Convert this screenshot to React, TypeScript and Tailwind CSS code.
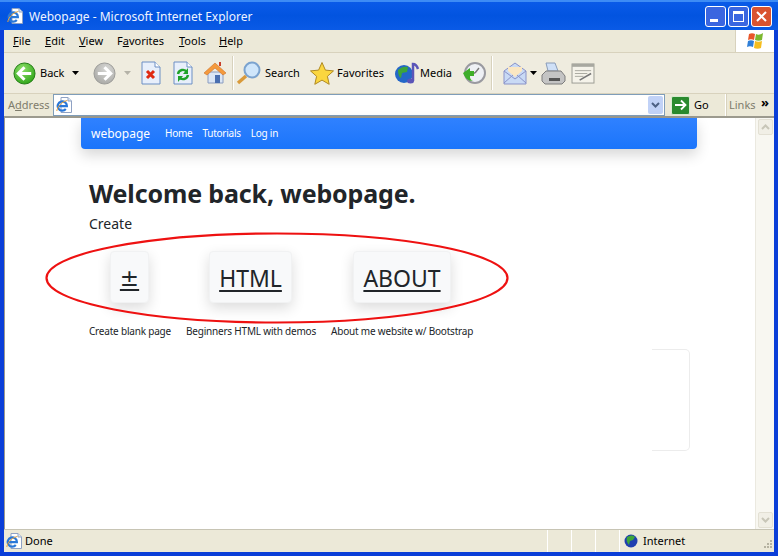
import React from "react";

const sep = <div className="w-[2px] h-[34px] bg-[#d8d2bd] border-r border-white shrink-0" />;

function IEIcon({ size = 16 }: { size?: number }) {
  return (
    <svg width={size} height={size} viewBox="0 0 16 16" className="shrink-0">
      <path d="M5 .5h7l3.500 3.500v11.500H5z" fill="#fff" stroke="#8fa2c4" />
      <path d="M12 .5V4h3.500" fill="#dfe8f5" stroke="#8fa2c4" />
      <path d="M1.500 9.200h9.400A4.600 4.600 0 1 0 9.800 12" fill="none" stroke="#2a78d8" strokeWidth="2.200" />
      <path d="M.8 14c.6-4.500 5-9.500 10.500-10.500" fill="none" stroke="#e8a33c" strokeWidth="1" />
    </svg>
  );
}

function Arrow({ id, from, to, dark, flip }: { id: string; from: string; to: string; dark: string; flip?: boolean }) {
  return (
    <svg width="23" height="23" viewBox="0 0 24 24" className={flip ? "shrink-0 -scale-x-100" : "shrink-0"}>
      <defs>
        <radialGradient id={id} cx="0.4" cy="0.3" r="0.8">
          <stop offset="0" stopColor={from} />
          <stop offset="1" stopColor={to} />
        </radialGradient>
      </defs>
      <circle cx="12" cy="12" r="11" fill={`url(#${id})`} stroke={dark} strokeWidth="1" />
      <path d="M6 12h13M12 5.500 5.500 12l6.500 6.500" fill="none" stroke="#fff" strokeWidth="3.200" />
    </svg>
  );
}

function Caret({ c = "#000" }: { c?: string }) {
  return <svg width="7" height="4" viewBox="0 0 7 4" className="shrink-0"><path d="M0 0h7L3.500 4z" fill={c} /></svg>;
}

function CapBtn({ children, bg }: { children: React.ReactNode; bg: string }) {
  return (
    <div className={`w-[21px] h-[21px] rounded-[3px] border border-white flex items-center justify-center ${bg}`}>
      {children}
    </div>
  );
}

function Menu({ label, u, w }: { label: string; u: number; w?: string }) {
  return (
    <span className={w}>
      {label.slice(0, u)}
      <span className="underline">{label[u]}</span>
      {label.slice(u + 1)}
    </span>
  );
}

function ScrollBtn({ up }: { up: boolean }) {
  return (
    <div className="h-[16px] w-[15px] ml-auto mr-[1px] rounded-[2px] border border-[#e3e0d4] bg-[#f1efe6] flex items-center justify-center">
      <svg width="9" height="6" viewBox="0 0 9 6">
        <path d={up ? "M1 5l3.500-3.500L8 5" : "M1 1l3.500 3.500L8 1"} fill="none" stroke="#c8c6b8" strokeWidth="2" />
      </svg>
    </div>
  );
}

function Card({ label, w, ml, symbol }: { label: string; w: string; ml: string; symbol?: boolean }) {
  return (
    <div className={`${w} ${ml} h-[52px] pt-[2px] rounded-[4px] bg-[#f8f9fa] border border-[#f1f2f3] shadow-[0_5px_14px_rgba(0,0,0,0.14)] flex items-center justify-center underline underline-offset-[3px] text-[#212529] text-[23px] ${symbol ? "font-['DejaVu_Sans',sans-serif]" : ""}`}>
      {label}
    </div>
  );
}

export default function App() {
  return (
    <div className="w-[778px] h-[556px] overflow-hidden flex flex-col bg-[#0a3ed8] text-black text-[11px] font-['Noto_Sans',sans-serif]">
      {/* Title bar */}
      <div className="h-[30px] shrink-0 flex items-center pl-[7px] pr-[6px] bg-gradient-to-b from-[#0a5be8] via-[#0254e0] to-[#0a5ae6] border-t-2 border-[#3d8cf5]">
        <IEIcon />
        <span className="ml-[6px] mt-[1px] text-[12px] text-[#eef3ff]">Webopage - Microsoft Internet Explorer</span>
        <div className="ml-auto flex gap-[2px]">
          <CapBtn bg="bg-[#3a66e0]"><div className="w-[8px] h-[3px] bg-white mt-[9px] mr-[3px]" /></CapBtn>
          <CapBtn bg="bg-[#3a66e0]"><div className="w-[11px] h-[11px] border border-white border-t-[3px]" /></CapBtn>
          <CapBtn bg="bg-[#d9532f]">
            <svg width="11" height="11" viewBox="0 0 11 11"><path d="M1 1l9 9M10 1l-9 9" stroke="#fff" strokeWidth="2" /></svg>
          </CapBtn>
        </div>
      </div>

      {/* Frame body */}
      <div className="flex-1 min-h-0 mx-[4px] mb-[4px] flex flex-col bg-[#ece9d8]">
        {/* Menu */}
        <div className="h-[23px] shrink-0 flex items-center border-b border-[#d8d2bd]">
          <div className="flex pl-[9px] mt-[1px]">
            <Menu label="File" u={0} w="w-[32px]" />
            <Menu label="Edit" u={0} w="w-[34px]" />
            <Menu label="View" u={0} w="w-[38px]" />
            <Menu label="Favorites" u={1} w="w-[62px]" />
            <Menu label="Tools" u={0} w="w-[40px]" />
            <Menu label="Help" u={0} />
          </div>
          <div className="ml-auto w-[39px] h-full bg-white flex items-center justify-center border-l border-[#d8d2bd]">
            <svg width="20" height="18" viewBox="0 0 20 18">
              <path d="M4 2c2-1 4-1 6 0L9 8C7 7 5 7 3 8z" fill="#e8562a" />
              <path d="M11 2c2 1 4 1 7-1l-1 7c-2 1-5 1-7 0z" fill="#7cb82f" />
              <path d="M3 9c2-1 4-1 6 0l-1 6c-2-1-4-1-6 0z" fill="#2f7fd8" />
              <path d="M10 9c2 1 5 1 7 0l-1 7c-2 1-5 1-7 0z" fill="#f5bd1f" />
            </svg>
          </div>
        </div>

        {/* Toolbar */}
        <div className="h-[41px] shrink-0 flex items-center pl-[9px] border-b border-[#d8d2bd] bg-[#efecdf]">
          <Arrow id="back" from="#8fe06a" to="#27a012" dark="#1f7a12" />
          <span className="ml-[4px] w-[32px]">Back</span>
          <Caret />
          <div className="ml-[14px]"><Arrow id="fwd" from="#d8d8d6" to="#a6a6a2" dark="#9a9a96" flip /></div>
          <div className="ml-[8px]"><Caret c="#b5b3a8" /></div>
          <svg width="20" height="24" viewBox="0 0 20 24" className="ml-[10px] shrink-0">
            <path d="M1 1h13l5 5v17H1z" fill="#e8effb" stroke="#6d8fc4" />
            <path d="M14 1v5h5" fill="#fff" stroke="#6d8fc4" />
            <path d="M6 10l7 7M13 10l-7 7" stroke="#e02a12" strokeWidth="3" />
          </svg>
          <svg width="20" height="24" viewBox="0 0 20 24" className="ml-[12px] shrink-0">
            <path d="M1 1h13l5 5v17H1z" fill="#e8effb" stroke="#6d8fc4" />
            <path d="M14 1v5h5" fill="#fff" stroke="#6d8fc4" />
            <path d="M5 13a5 5 0 0 1 9-2M15 14a5 5 0 0 1-9 2" fill="none" stroke="#1fa32a" strokeWidth="2.400" />
            <path d="M15 7v6h-5zM5 21v-6h5z" fill="#1fa32a" />
          </svg>
          <svg width="24" height="24" viewBox="0 0 24 24" className="ml-[10px] shrink-0">
            <path d="M5 11v11h15V11z" fill="#dbe6f5" stroke="#8a9cc0" />
            <path d="M1 12 12 2l11 10-3 2-8-7-8 7z" fill="#f59a3c" stroke="#c9702a" strokeWidth=".6" />
            <rect x="12" y="14" width="5" height="8" fill="#4a6fb0" />
            <rect x="16" y="1" width="2" height="4" fill="#c9402a" />
          </svg>
          <div className="ml-[5px]">{sep}</div>
          <svg width="26" height="24" viewBox="0 0 26 24" className="ml-[2px] shrink-0">
            <circle cx="16" cy="9" r="7.500" fill="#cfe6fb" stroke="#7ba3cf" strokeWidth="2" />
            <path d="M10 15 2 22" stroke="#d99a3a" strokeWidth="3.400" />
          </svg>
          <span className="ml-[3px] w-[44px]">Search</span>
          <svg width="26" height="25" viewBox="0 0 26 25" className="shrink-0">
            <path d="M13 1.500l3.400 7.600 8.100.8-6.100 5.400 1.800 8-7.200-4.200-7.200 4.200 1.800-8L1.500 9.900l8.100-.8z" fill="#fbd63f" stroke="#b08a22" />
          </svg>
          <span className="ml-[2px] w-[57px]">Favorites</span>
          <svg width="26" height="24" viewBox="0 0 26 24" className="shrink-0">
            <circle cx="10" cy="13" r="9" fill="#2467c8" />
            <path d="M4 9c3-3 7-4 10-3l-1 5-5 1-1 5c-2-1-3-4-3-8z" fill="#3da53a" />
            <path d="M19 20V3c2 0 4 2 5 5" fill="none" stroke="#5b55b8" strokeWidth="2.500" />
            <ellipse cx="16.500" cy="20" rx="3.500" ry="2.500" fill="#5b55b8" />
          </svg>
          <span className="w-[41px]">Media</span>
          <svg width="26" height="24" viewBox="0 0 26 24" className="shrink-0">
            <circle cx="14" cy="12" r="10" fill="#eef0f5" stroke="#9a9aa0" strokeWidth="2" />
            <path d="M14 12l4-5M14 12h-4" stroke="#777" strokeWidth="1.400" />
            <path d="M2 12l7-5v3h4v5H9a5 5 0 0 0 3 5C7 20 4 17 2 12z" fill="#3fae2a" />
          </svg>
          <div className="ml-[4px]">{sep}</div>
          <svg width="25" height="24" viewBox="0 0 25 24" className="ml-[10px] shrink-0">
            <path d="M1 10 12 2l11 8v13H1z" fill="#c9daf5" stroke="#8a93c8" />
            <path d="M5 10V6h14v4l-7 6z" fill="#fbe7c2" />
            <path d="M1 22l9-8M23 22l-9-8M1 10l11 8 11-8" fill="none" stroke="#8a93c8" />
          </svg>
          <div className="ml-[2px]"><Caret /></div>
          <svg width="25" height="25" viewBox="0 0 25 25" className="ml-[4px] shrink-0">
            <path d="M5 2h9l3 8H7z" fill="#cfe0f7" stroke="#8a9cb8" />
            <path d="M1 14l4-4h15l4 5v5l-3 3H4l-3-3z" fill="#c4c4c4" stroke="#7d7d7d" />
            <rect x="8" y="17" width="11" height="3" fill="#555" />
          </svg>
          <svg width="24" height="21" viewBox="0 0 25 22" className="ml-[5px] shrink-0">
            <rect x="1" y="1" width="23" height="20" fill="#f5f3ea" stroke="#9a9a92" />
            <rect x="1" y="1" width="23" height="3" fill="#a8a8a0" />
            <path d="M4 8h17M4 11h13M4 14h9" stroke="#a8a8a0" />
            <path d="M9 18l12-7" stroke="#777" strokeWidth="1.600" />
          </svg>
        </div>

        {/* Address bar */}
        <div className="h-[22px] shrink-0 flex items-center bg-[#ece9d8]">
          <span className="pl-[4px] w-[49px] text-[#7e7c6c]"><Menu label="Address" u={1} /></span>
          <div className="w-[612px] h-[22px] flex items-center bg-white border border-[#7f9db9] pl-[2px] pr-[1px]">
            <IEIcon />
            <div className="ml-auto w-[15px] h-[18px] rounded-[2px] bg-[#c1d2f7] flex items-center justify-center">
              <svg width="9" height="6" viewBox="0 0 9 6"><path d="M1 1l3.500 3.500L8 1" fill="none" stroke="#4d6185" strokeWidth="2" /></svg>
            </div>
          </div>
          <div className="ml-[6px] w-[19px] h-[19px] rounded-[2px] bg-[#2a8a2e] border border-[#d8ebd0] flex items-center justify-center shrink-0">
            <svg width="13" height="12" viewBox="0 0 13 12"><path d="M1 6h10M7 1.500 11.500 6 7 10.500" fill="none" stroke="#fff" strokeWidth="1.800" /></svg>
          </div>
          <span className="ml-[4px] w-[31px]">Go</span>
          <div className="w-[2px] h-full border-l border-white bg-[#d8d2bd]" />
          <span className="ml-[2px] w-[32px] text-[#7e7c6c]">Links</span>
          <span className="-mt-[6px] font-bold leading-none text-[13px]">»</span>
        </div>

        {/* Content */}
        <div className="flex-1 min-h-0 flex border-t-[2px] border-[#9c9a8e] border-l border-l-[#9c9a8e] bg-white relative">
          <div className="flex-1 min-w-0 pl-[76px] text-[#212529]">
            <div className="w-[616px] h-[31px] flex items-center pl-[10px] rounded-b-[4px] bg-gradient-to-b from-[#2f81ff] to-[#1a75fb] shadow-[0_6px_14px_rgba(0,0,0,0.16)] text-white">
              <span className="text-[12px] w-[60px]">webopage</span>
              <div className="ml-[14px] flex gap-[10px] text-[10px] tracking-[-0.25px]">
                <span>Home</span>
                <span>Tutorials</span>
                <span>Log in</span>
              </div>
            </div>
            <div className="pl-[8px]">
              <h1 className="mt-[29px] text-[25px] leading-[30px] font-bold tracking-[-0.13px]">Welcome back, webopage.</h1>
              <div className="mt-[5px] text-[14px] leading-[22px]">Create</div>
              <div className="mt-[16px] flex">
                <Card label="±" w="w-[39px]" ml="ml-[21px]" symbol />
                <Card label="HTML" w="w-[83px]" ml="ml-[60px]" />
                <Card label="ABOUT" w="w-[98px]" ml="ml-[61px]" />
              </div>
              <div className="mt-[21px] flex text-[10px] leading-[14px] tracking-[-0.2px]">
                <span>Create blank page</span>
                <span className="ml-[15px]">Beginners HTML with demos</span>
                <span className="ml-[15px]">About me website w/ Bootstrap</span>
              </div>
              <div className="mt-[11px] ml-[563px] w-[38px] h-[102px] rounded-r-[5px] border border-l-0 border-[#ececec]" />
            </div>
          </div>

          {/* Scrollbar */}
          <div className="w-[19px] shrink-0 flex flex-col justify-between py-[1px] bg-[#f8f7f1] border-l border-[#ebe9e0]">
            <ScrollBtn up />
            <ScrollBtn up={false} />
          </div>

          {/* Red ellipse annotation */}
          <svg width="470" height="98" viewBox="0 0 470 98" className="absolute left-[37px] top-[113px] pointer-events-none">
            <ellipse cx="235" cy="47" rx="230.500" ry="44.500" fill="none" stroke="#ee1111" strokeWidth="2.200" />
          </svg>
        </div>

        {/* Status bar */}
        <div className="h-[23px] shrink-0 flex items-center border-t border-[#c7c4b4] bg-[#ece9d8]">
          <div className="ml-[2px]"><IEIcon /></div>
          <span className="ml-[3px] mt-[1px]">Done</span>
          <div className="ml-auto flex items-stretch h-full">
            <div className="w-[24px] border-r border-white" />
            <div className="w-[24px] border-r border-white" />
            <div className="w-[24px] border-r border-white" />
            <div className="w-[24px] border-r border-white" />
            <div className="w-[154px] flex items-center pl-[4px]">
              <svg width="14" height="14" viewBox="0 0 14 14"><circle cx="7" cy="7" r="6.500" fill="#1f3fb0" /><path d="M3 3c3-2 6-2 8 0L9 6 6 7 5 11C3 9 2 6 3 3z" fill="#3da53a" /></svg>
              <span className="ml-[5px] mt-[1px]">Internet</span>
              <svg width="11" height="11" viewBox="0 0 11 11" className="ml-auto mr-[1px] mt-[6px]" fill="#b5b2a0">
                <rect x="8" y="1" width="2" height="2" /><rect x="5" y="4" width="2" height="2" /><rect x="8" y="4" width="2" height="2" />
                <rect x="2" y="7" width="2" height="2" /><rect x="5" y="7" width="2" height="2" /><rect x="8" y="7" width="2" height="2" />
              </svg>
            </div>
          </div>
        </div>
      </div>
    </div>
  );
}
